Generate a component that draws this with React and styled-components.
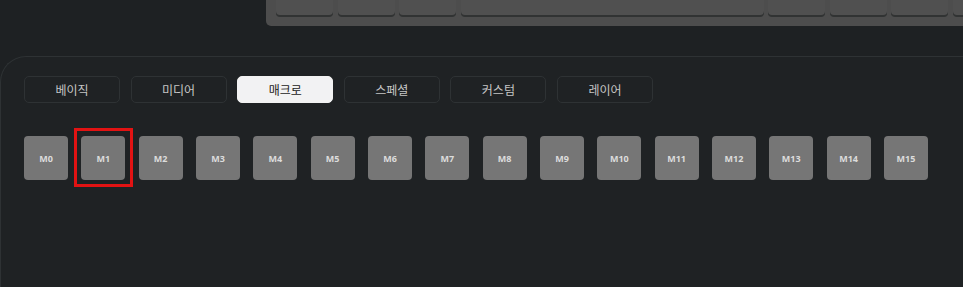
import React from 'react'
import styled, { createGlobalStyle } from 'styled-components'

const Global = createGlobalStyle`
  html, body {
    margin: 0;
    padding: 0;
    background: #1e2123;
    overflow: hidden;
  }
  body {
    width: 963px;
    height: 287px;
    font-family: "Noto Sans CJK KR", "Noto Sans", sans-serif;
  }
`

const Page = styled.div`
  width: 963px;
  height: 287px;
  overflow: hidden;
  display: flex;
  flex-direction: column;
`

const KeyboardStrip = styled.div`
  margin-left: 266px;
  width: 760px;
  height: 26px;
  flex-shrink: 0;
  background: #4d4d4d;
  border-radius: 0 0 0 5px;
  box-sizing: border-box;
  padding: 0 0 11px 10px;
  display: flex;
  align-items: flex-end;
  gap: 4.5px;
`

const Key = styled.div`
  width: ${p => p.$w || 57}px;
  flex-shrink: 0;
  height: 30px;
  margin-top: -15px;
  background: #505050;
  border-radius: 0 0 4px 4px;
  box-shadow: 0 2px 0 #313333, 0 1px 0 #3a3b3b;
`

const Panel = styled.div`
  margin-top: 30px;
  flex: 1;
  border-top: 1px solid #2e3234;
  border-left: 1px solid #2e3234;
  border-top-left-radius: 26px;
  padding: 19px 0 0 23px;
  background: #1f2224;
`

const Tabs = styled.div`
  display: flex;
  gap: 10.6px;
`

const Tab = styled.div`
  width: 96px;
  height: 27px;
  box-sizing: border-box;
  border: 1px solid ${p => (p.$active ? '#f2f2f2' : '#2e3234')};
  background: ${p => (p.$active ? '#f2f2f3' : 'transparent')};
  color: ${p => (p.$active ? '#1b1b1b' : '#c6c6c6')};
  border-radius: 5px;
  display: flex;
  align-items: center;
  justify-content: center;
  font-size: 12px;
  padding-bottom: 1px;
`

const Macros = styled.div`
  margin-top: 33px;
  display: flex;
  gap: 13.33px;
`

const MacroKey = styled.div`
  position: relative;
  width: 44px;
  height: 44px;
  flex-shrink: 0;
  background: #767676;
  border-radius: 4px;
  display: flex;
  align-items: center;
  justify-content: center;
  font-family: "Noto Sans", "DejaVu Sans", sans-serif;
  font-weight: 700;
  font-size: 9px;
  color: #dcdcdc;
  ${p =>
    p.$selected &&
    `
    &::after {
      content: '';
      position: absolute;
      left: -7px;
      top: -8px;
      width: 59px;
      height: 59px;
      box-sizing: border-box;
      border: 3px solid #e21313;
    }
  `}
`

const keys = [57, 57, 57, 303, 57, 57, 57, 57]
const tabs = ['베이직', '미디어', '매크로', '스페셜', '커스텀', '레이어']

const App = () => {
  return (
    <Page>
      <Global />
      <KeyboardStrip>
        {keys.map((w, i) => (
          <Key key={i} $w={w} />
        ))}
      </KeyboardStrip>
      <Panel>
        <Tabs>
          {tabs.map(t => (
            <Tab key={t} $active={t === '매크로'}>
              {t}
            </Tab>
          ))}
        </Tabs>
        <Macros>
          {Array.from({ length: 16 }, (_, i) => (
            <MacroKey key={i} $selected={i === 1}>
              M{i}
            </MacroKey>
          ))}
        </Macros>
      </Panel>
    </Page>
  )
}

export default App
